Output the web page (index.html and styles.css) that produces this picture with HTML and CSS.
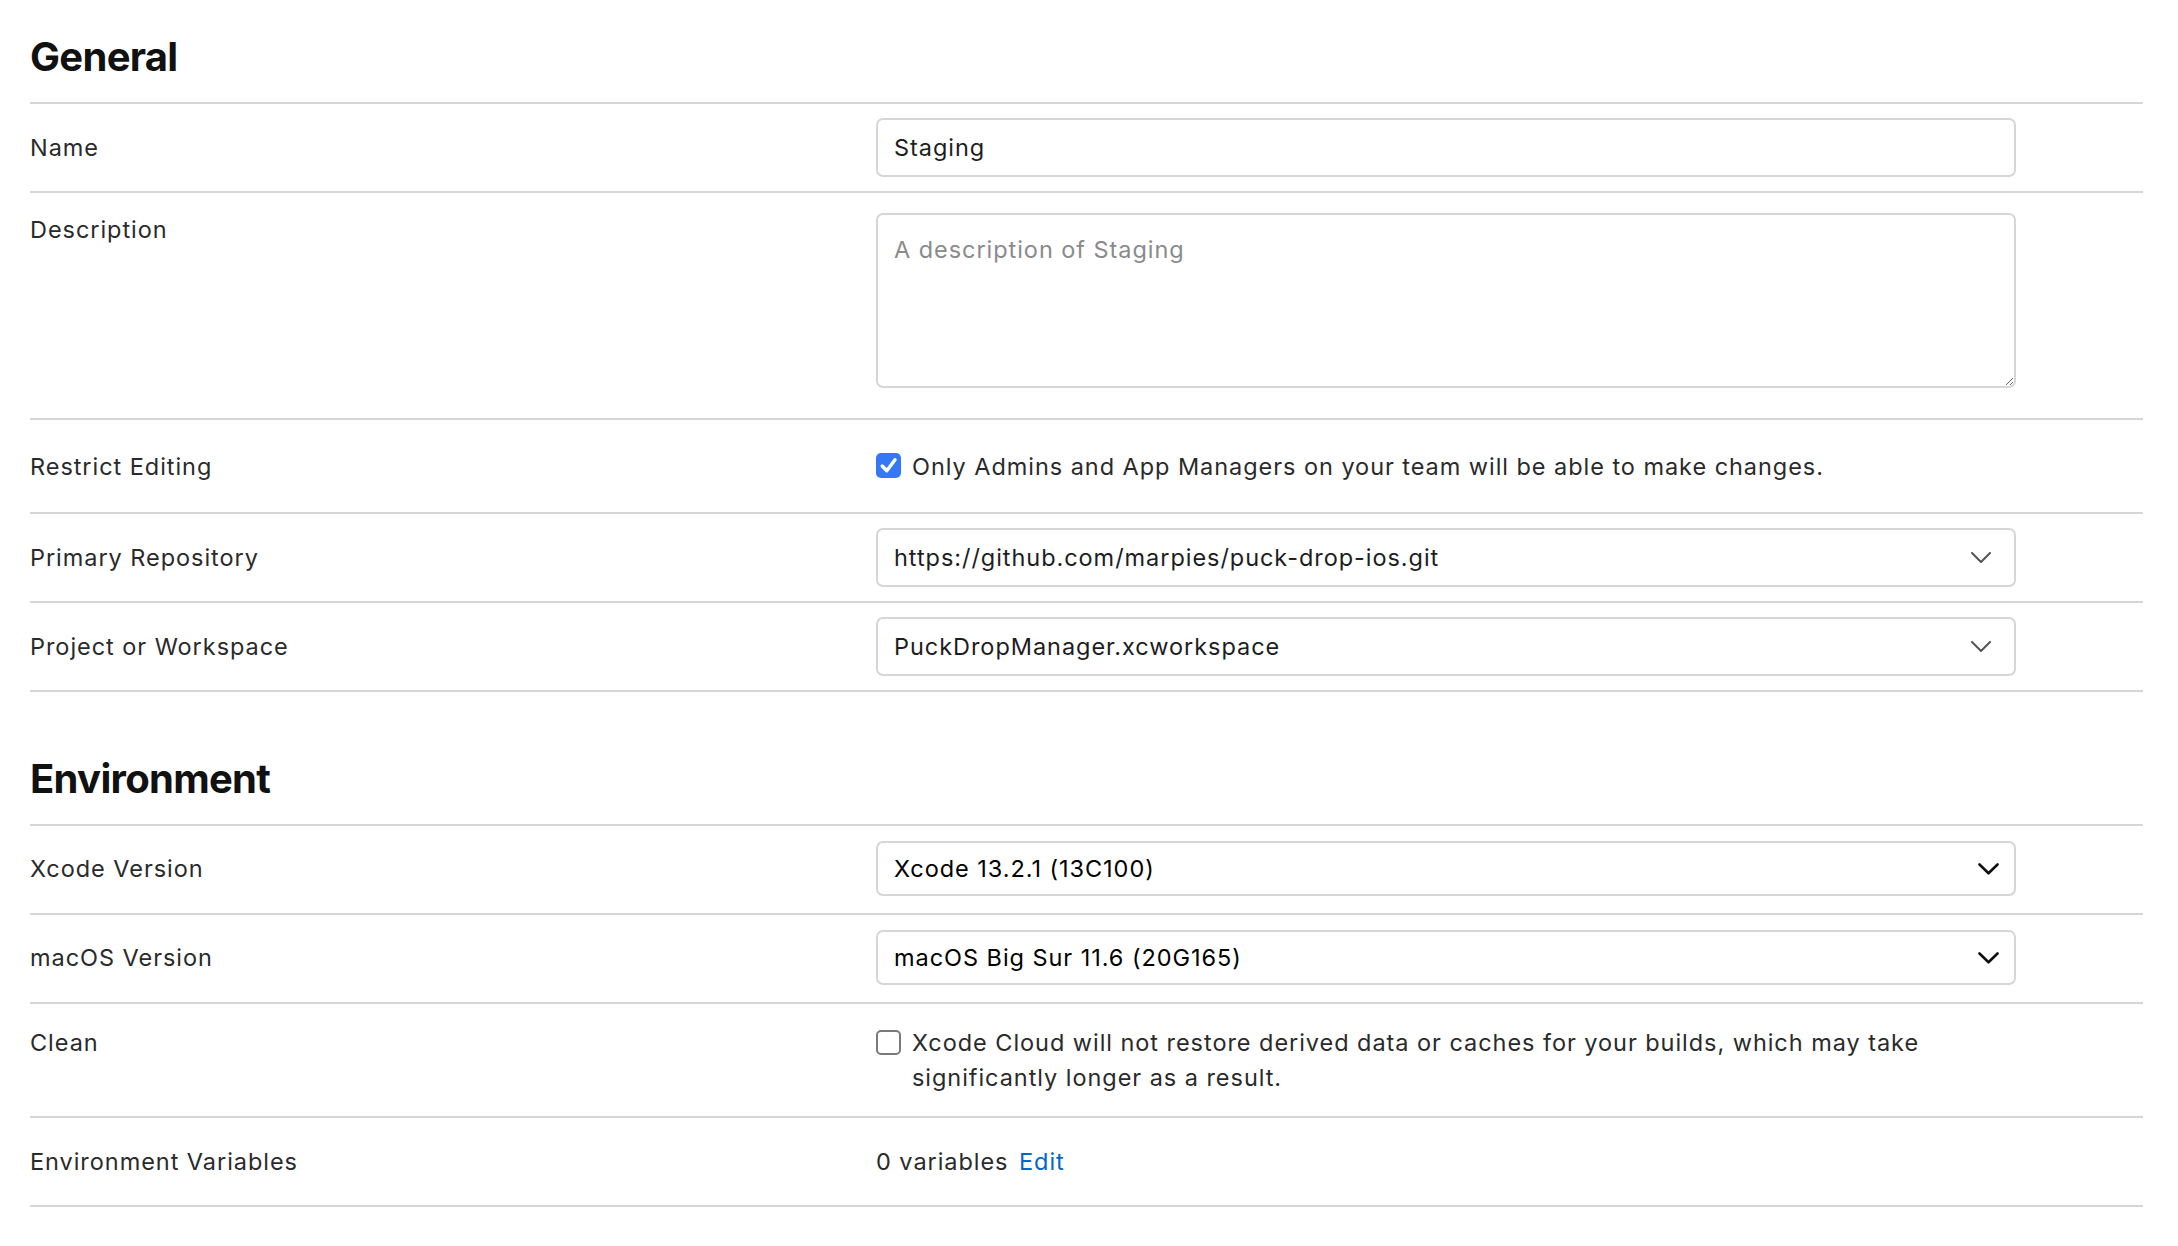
FILE: index.html
```html
<!DOCTYPE html>
<html lang="en">
<head>
<meta charset="utf-8">
<title>Workflow settings</title>
<link rel="stylesheet" href="styles.css">
</head>
<body>
<main class="page">
  <section class="section">
    <h2 class="section-title">General</h2>
    <div class="row row-input">
      <label class="label" for="name">Name</label>
      <input class="field" id="name" type="text" value="Staging">
    </div>
    <div class="row row-textarea">
      <label class="label" for="desc">Description</label>
      <textarea class="textarea" id="desc" placeholder="A description of Staging"></textarea>
    </div>
    <div class="row row-check">
      <div class="label">Restrict Editing</div>
      <div class="check">
        <span class="box box-on"><svg width="25" height="25" viewBox="0 0 25 25"><path d="M6.2 13 L10.8 17.8 L19 6.8" fill="none" stroke="#fff" stroke-width="3.4" stroke-linecap="round" stroke-linejoin="round"/></svg></span>
        <span class="check-text">Only Admins and App Managers on your team will be able to make changes.</span>
      </div>
    </div>
    <div class="row row-input">
      <div class="label">Primary Repository</div>
      <div class="field combo">
        <span>https://github.com/marpies/puck-drop-ios.git</span>
        <svg class="chev" width="20" height="11" viewBox="0 0 20 11"><path d="M1 1 L10 10 L19 1" fill="none" stroke="#555" stroke-width="2" stroke-linecap="round" stroke-linejoin="round"/></svg>
      </div>
    </div>
    <div class="row row-input">
      <div class="label">Project or Workspace</div>
      <div class="field combo">
        <span>PuckDropManager.xcworkspace</span>
        <svg class="chev" width="20" height="11" viewBox="0 0 20 11"><path d="M1 1 L10 10 L19 1" fill="none" stroke="#555" stroke-width="2" stroke-linecap="round" stroke-linejoin="round"/></svg>
      </div>
    </div>
  </section>

  <section class="section">
    <h2 class="section-title">Environment</h2>
    <div class="row row-select">
      <div class="label">Xcode Version</div>
      <div class="select">
        <span>Xcode 13.2.1 (13C100)</span>
        <svg class="chev-dark" width="21" height="12" viewBox="0 0 21 12"><path d="M1.5 1.5 L10.5 10.3 L19.5 1.5" fill="none" stroke="#111" stroke-width="2.6" stroke-linecap="round" stroke-linejoin="round"/></svg>
      </div>
    </div>
    <div class="row row-select">
      <div class="label">macOS Version</div>
      <div class="select">
        <span>macOS Big Sur 11.6 (20G165)</span>
        <svg class="chev-dark" width="21" height="12" viewBox="0 0 21 12"><path d="M1.5 1.5 L10.5 10.3 L19.5 1.5" fill="none" stroke="#111" stroke-width="2.6" stroke-linecap="round" stroke-linejoin="round"/></svg>
      </div>
    </div>
    <div class="row row-multi">
      <div class="label">Clean</div>
      <div class="check">
        <span class="box box-off"></span>
        <span class="check-text">Xcode Cloud will not restore derived data or caches for your builds, which may take significantly longer as a result.</span>
      </div>
    </div>
    <div class="row row-text">
      <div class="label">Environment Variables</div>
      <div class="value">0 variables <a class="link" href="#">Edit</a></div>
    </div>
  </section>
</main>
</body>
</html>
```
FILE: styles.css
```css
body {
  margin: 0;
  background: #fff;
  color: #1d1d1f;
  font-family: Inter, "Noto Sans", sans-serif;
}

.page {
  padding: 0 35px 0 30px;
}

.section + .section {
  margin-top: 30px;
}

.section-title {
  margin: 0;
  padding: 33px 0 21px;
  font-size: 40px;
  line-height: 48px;
  font-weight: 700;
  letter-spacing: -0.7px;
  color: #111;
  border-bottom: 2px solid #d6d6d6;
}

.row {
  display: grid;
  grid-template-columns: 846px 1140px;
  align-items: center;
  border-bottom: 2px solid #d6d6d6;
  font-size: 23.5px;
  line-height: 33px;
  letter-spacing: 0.95px;
}

.row-input { padding: 14px 0; }
.row-textarea { align-items: start; padding: 20px 0 30px; }
.row-check { padding: 29.5px 0; }
.row-select { padding: 15px 0 17px; }
.row-multi { padding: 21px 0; line-height: 35px; align-items: start; }
.row-text { padding: 27px 0; }

.label {
  color: #2a2a2c;
}

.field {
  box-sizing: border-box;
  width: 100%;
  height: 59px;
  margin: 0;
  padding: 0 16px;
  border: 2px solid #d6d6d6;
  border-radius: 7px;
  background: #fff;
  font: inherit;
  letter-spacing: inherit;
  color: #1d1d1f;
  outline: none;
}

.combo {
  display: flex;
  align-items: center;
  justify-content: space-between;
  padding-right: 23px;
}

.textarea {
  display: block;
  box-sizing: border-box;
  width: 100%;
  height: 175px;
  margin: 0;
  padding: 18px 16px;
  border: 2px solid #d6d6d6;
  border-radius: 7px;
  font: inherit;
  letter-spacing: inherit;
  line-height: 33px;
  color: #1d1d1f;
  resize: vertical;
  outline: none;
}

.textarea::placeholder {
  color: #8a8a8e;
}

.select {
  box-sizing: border-box;
  height: 55px;
  display: flex;
  align-items: center;
  justify-content: space-between;
  padding: 0 15px 0 16px;
  border: 2px solid #d6d6d6;
  border-radius: 7px;
  color: #000;
}

.chev, .chev-dark {
  flex: none;
  display: block;
}

.check {
  display: flex;
  align-items: flex-start;
  gap: 11px;
}

.box {
  flex: none;
  box-sizing: border-box;
  width: 25px;
  height: 25px;
  margin-top: 3px;
  border-radius: 5px;
}

.box svg { display: block; }

.box-on {
  background: #3478f6;
}

.box-off {
  border: 2px solid #7a7a7a;
  background: #fff;
  margin-top: 5px;
}

.check-text {
  color: #2a2a2c;
}

.value {
  color: #2a2a2c;
}

.link {
  color: #0066cc;
  text-decoration: none;
  margin-left: 3px;
}
```
